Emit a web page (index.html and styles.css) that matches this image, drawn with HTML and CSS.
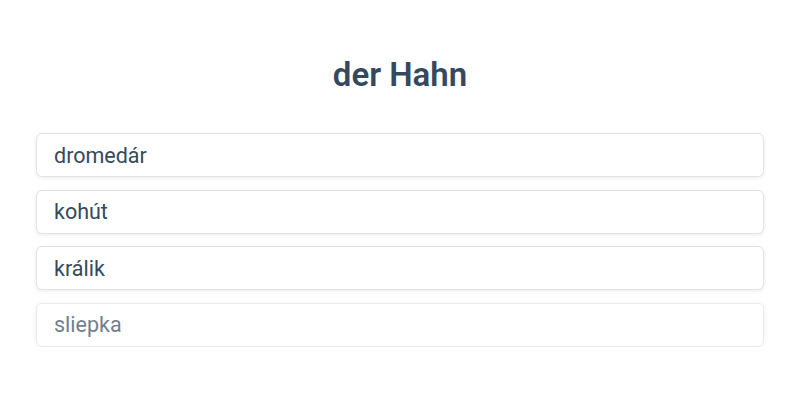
FILE: index.html
```html
<!DOCTYPE html>
<html lang="de">
<head>
    <meta charset="UTF-8">
    <meta name="viewport" content="width=device-width, initial-scale=1.0">
    <title>Quiz</title>
    <link rel="stylesheet" href="styles.css">
</head>
<body>
    <div class="quiz">
        <h1 class="question">der Hahn</h1>
        <div class="answers">
            <button class="answer">dromedár</button>
            <button class="answer">kohút</button>
            <button class="answer">králik</button>
            <button class="answer faded">sliepka</button>
        </div>
    </div>
</body>
</html>
```

FILE: styles.css
```css
* {
    box-sizing: border-box;
    margin: 0;
    padding: 0;
    font-family: 'Roboto', 'Liberation Sans', sans-serif;
}

body {
    background-color: #fff;
    color: #2c3e50;
}

.quiz {
    padding: 56px 36px 0;
}

.question {
    text-align: center;
    font-size: 33px;
    line-height: 38px;
    font-weight: 600;
    color: #34495e;
    margin-bottom: 39px;
}

.answers {
    display: flex;
    flex-direction: column;
    gap: 12.5px;
}

.answer {
    height: 44px;
    padding: 0 17px;
    text-align: left;
    background-color: #fff;
    border: 1px solid #e2e2e2;
    border-radius: 6px;
    box-shadow: 0 1px 4px rgba(0, 0, 0, 0.08);
    font-size: 21.5px;
    color: #34495e;
    cursor: pointer;
}

.answer.faded {
    opacity: 0.7;
}
```
